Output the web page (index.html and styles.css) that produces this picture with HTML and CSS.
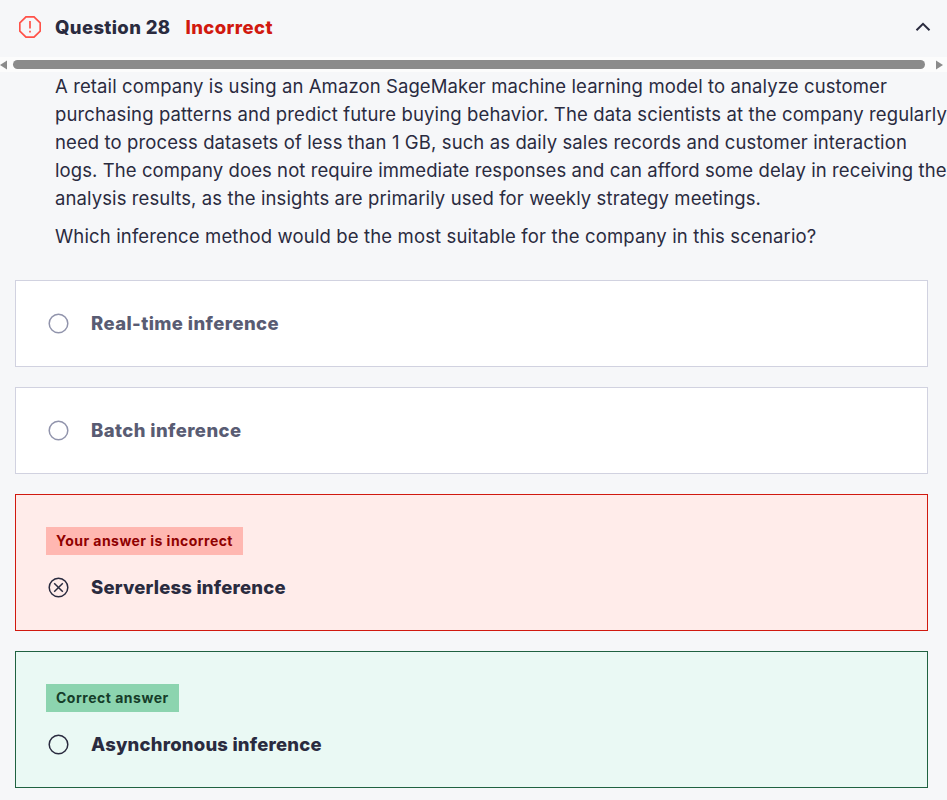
FILE: index.html
```
<!DOCTYPE html>
<html lang="en">
<head>
<meta charset="utf-8">
<title>Question 28</title>
<link rel="stylesheet" href="styles.css">
</head>
<body>
<header class="head">
  <svg class="alert" viewBox="0 0 22 22" width="22" height="22"><path d="M7 .8h8L21.200 7v8L15 21.200H7L.8 15V7z"/><path d="M11 5v7.500M11 14.800v1.800"/></svg>
  <h1 class="title">Question 28</h1>
  <span class="status">Incorrect</span>
  <svg class="chevron" viewBox="0 0 16 10" width="16" height="10"><path d="M1.500 8.200 8 1.800l6.500 6.400"/></svg>
</header>
<div class="scrollbar">
  <svg viewBox="0 0 7 10" width="7" height="10"><path d="M7 .5v9L0 5z"/></svg>
  <div class="thumb"></div>
  <svg viewBox="0 0 7 10" width="7" height="10"><path d="M0 .5v9L7 5z"/></svg>
</div>
<section class="prompt">
  <p><span class="l1">A retail company is using an Amazon SageMaker machine learning model to analyze customer</span><br>
  <span class="l2">purchasing patterns and predict future buying behavior. The data scientists at the company regularly</span><br>
  <span class="l3">need to process datasets of less than 1 GB, such as daily sales records and customer interaction</span><br>
  <span class="l4">logs. The company does not require immediate responses and can afford some delay in receiving the</span><br>
  <span class="l5">analysis results, as the insights are primarily used for weekly strategy meetings.</span></p>
  <p class="ask">Which inference method would be the most suitable for the company in this scenario?</p>
</section>
<main class="answers">
  <div class="card">
    <div class="row"><svg class="radio" viewBox="0 0 21 21" width="21" height="21"><circle cx="10.500" cy="10.500" r="9.300"/></svg><span class="wide">Real-time inference</span></div>
  </div>
  <div class="card">
    <div class="row"><svg class="radio" viewBox="0 0 21 21" width="21" height="21"><circle cx="10.500" cy="10.500" r="9.300"/></svg><span class="wide">Batch inference</span></div>
  </div>
  <div class="card wrong">
    <div class="tag">Your answer is incorrect</div>
    <div class="row"><svg class="radio" viewBox="0 0 21 21" width="21" height="21"><circle cx="10.500" cy="10.500" r="9.300"/><path d="m6.200 6.200 8.600 8.600m0-8.600-8.600 8.600"/></svg><span>Serverless inference</span></div>
  </div>
  <div class="card right">
    <div class="tag">Correct answer</div>
    <div class="row"><svg class="radio" viewBox="0 0 21 21" width="21" height="21"><circle cx="10.500" cy="10.500" r="9.300"/></svg><span>Asynchronous inference</span></div>
  </div>
</main>
</body>
</html>
```
FILE: styles.css
```
* { box-sizing: border-box; }
body {
  margin: 0;
  height: 800px;
  overflow: hidden;
  background: #f6f7f9;
  color: #2a2b3f;
  font: 400 18.5px/28px Inter, "Liberation Sans", sans-serif;
}
svg { display: block; flex: none; fill: none; }
.head {
  display: flex;
  align-items: center;
  height: 57px;
  padding: 0 16px 3px 19px;
}
.alert { stroke: #ff5249; stroke-width: 1.7; }
.title { margin: 0 0 0 14px; font-size: inherit; font-weight: 800; letter-spacing: .35px; }
.status { margin-left: 15px; color: #d1190f; font-weight: 800; letter-spacing: .42px; }
.chevron { margin-left: auto; stroke: #2a2b3f; stroke-width: 2; }
.scrollbar { display: flex; align-items: center; gap: 6px; height: 15px; background: #fcfcfc; }
.scrollbar svg { fill: #8b8b8b; }
.scrollbar svg:last-child { margin-left: 5px; }
.thumb { width: 912px; height: 9px; border-radius: 5px; background: #8b8b8b; }
.prompt { padding-left: 55px; white-space: nowrap; }
.prompt p { margin: 0 0 10px; }
.l1 { letter-spacing: .102px; }
.l2 { letter-spacing: .129px; }
.l3 { letter-spacing: .112px; }
.l4 { letter-spacing: .08px; }
.l5 { letter-spacing: .104px; }
.prompt .ask { margin: 0; letter-spacing: .14px; }
.answers { display: flex; flex-direction: column; gap: 20px; padding: 30px 19px 0 15px; }
.card { border: 1px solid #d1d2e0; padding: 28px 30px 29px; background: #fff; color: #595c73; }
.row { display: flex; align-items: center; gap: 22px; height: 28px; padding-left: 2px; font-weight: 800; letter-spacing: .2px; }
.wide { letter-spacing: .4px; }
.radio { stroke: #9194ac; stroke-width: 1.5; }
.wrong, .right { padding-top: 32px; color: #2a2b3f; }
.wrong { border-color: #d1190f; background: #ffecea; }
.right { border-color: #206241; background: #eaf9f4; }
.wrong .radio, .right .radio { stroke: #2a2b3f; }
.tag { width: fit-content; margin-bottom: 18px; padding: 0 10px; font-size: 14px; font-weight: 700; letter-spacing: .46px; }
.wrong .tag { background: #ffb7b1; color: #8f0000; }
.right .tag { background: #8cd4af; color: #153d29; letter-spacing: .51px; }
```
